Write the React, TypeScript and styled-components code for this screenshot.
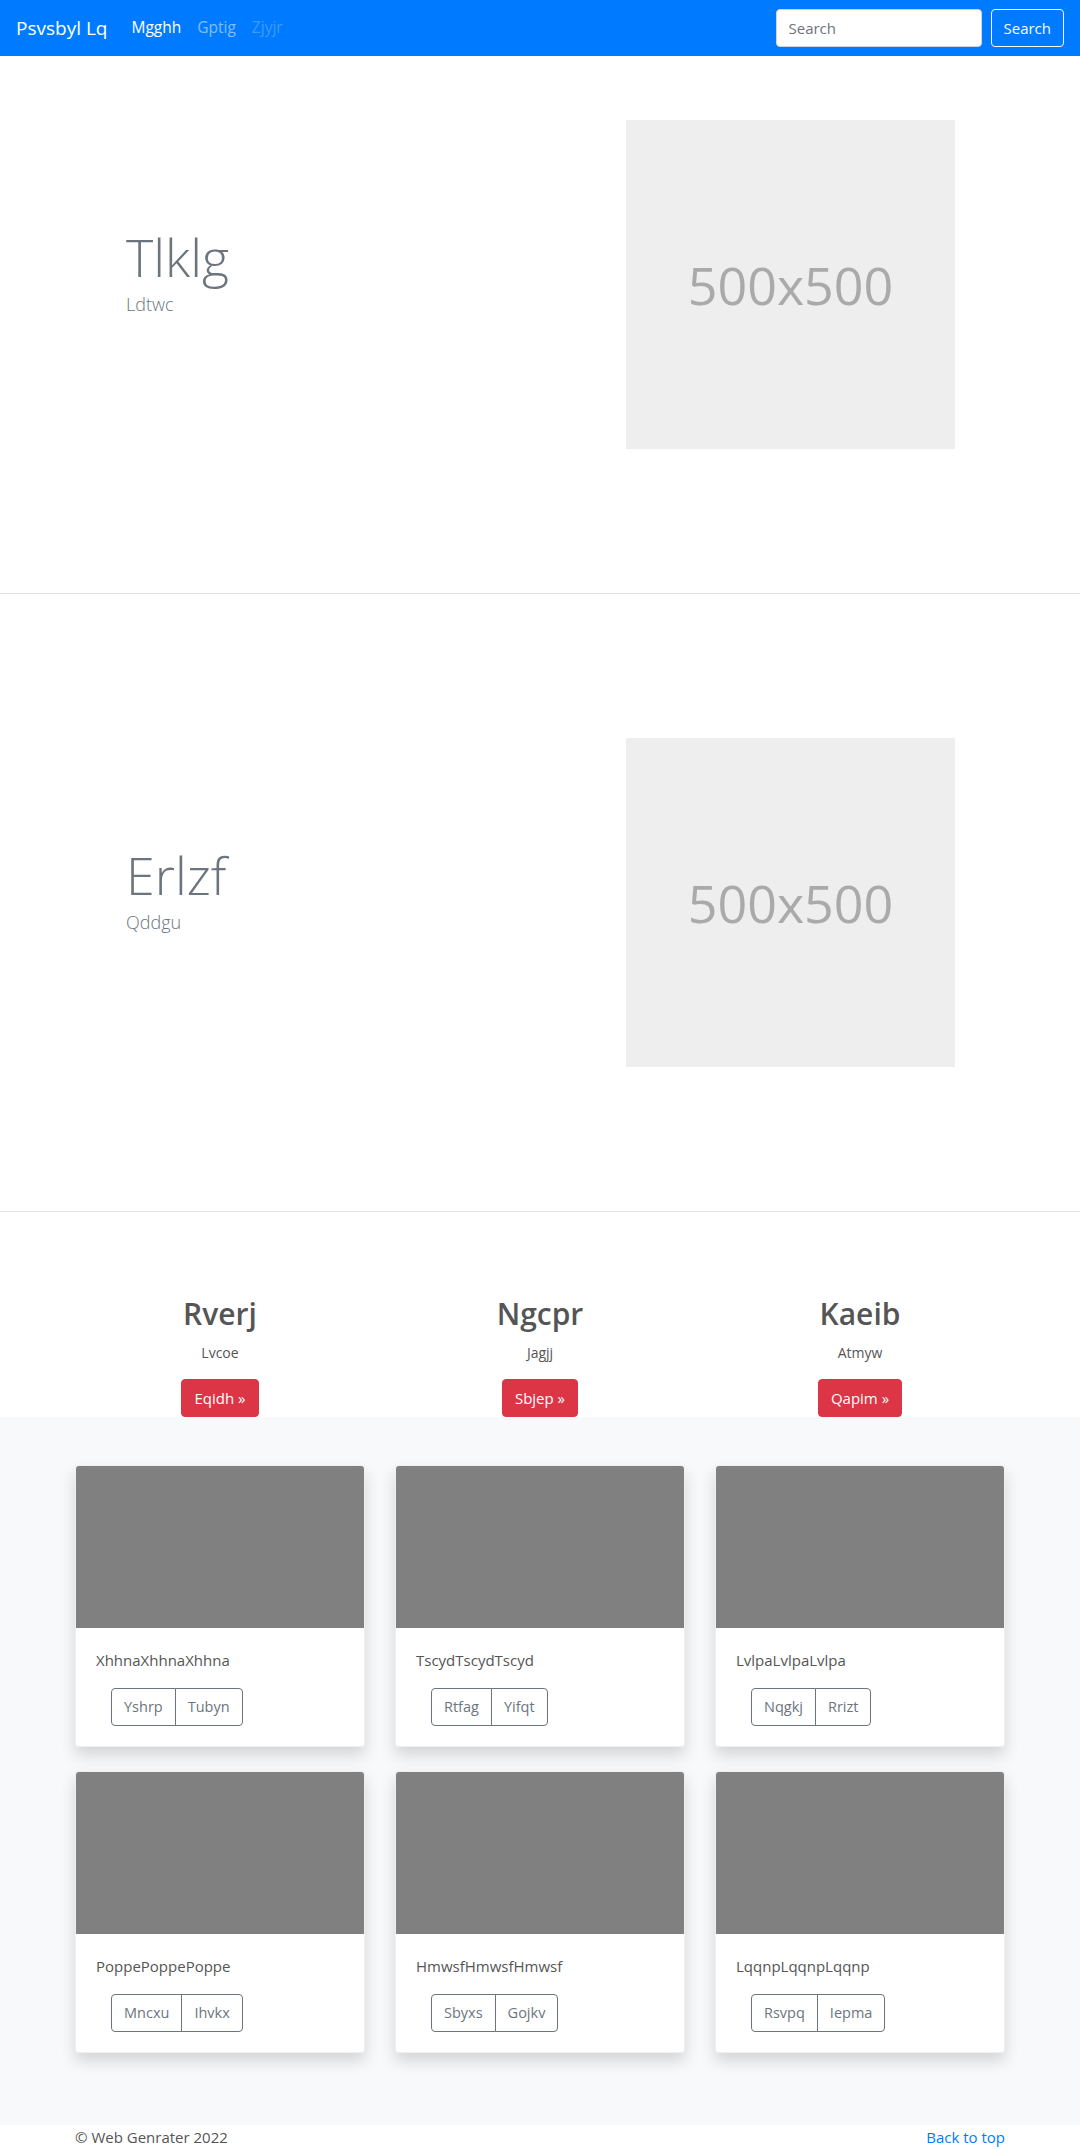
import React from "react";
import styled, { createGlobalStyle } from "styled-components";

const Global = createGlobalStyle`
  * { box-sizing: border-box; }
  body {
    margin: 0;
    font-family: "Open Sans", "Noto Sans", sans-serif;
    font-size: 16px;
    line-height: 1.5;
    color: #212529;
    background: #fff;
  }
`;

const Navbar = styled.nav`
  display: flex;
  align-items: center;
  height: 56px;
  padding: 8px 16px;
  background: #007bff;
`;

const Brand = styled.a`
  font-size: 19px;
  line-height: 30px;
  padding: 5px 0;
  margin-right: 16px;
  color: #fff;
  text-decoration: none;
`;

const NavList = styled.div`
  display: flex;
`;

const NavLink = styled.a<{ $state: "active" | "normal" | "disabled" }>`
  padding: 8px;
  font-size: 15.5px;
  color: ${(p) =>
    p.$state === "active"
      ? "#fff"
      : p.$state === "normal"
      ? "rgba(255,255,255,.5)"
      : "rgba(255,255,255,.25)"};
  text-decoration: none;
`;

const SearchForm = styled.form`
  margin-left: auto;
  display: flex;
  gap: 9px;
`;

const SearchInput = styled.input`
  width: 206px;
  height: 38px;
  padding: 6px 12px;
  font-family: inherit;
  font-size: 15px;
  color: #495057;
  border: 1px solid #ced4da;
  border-radius: 4px;
  background: #fff;
  &::placeholder { color: #6c757d; }
`;

const OutlineLightButton = styled.button`
  height: 38px;
  padding: 6px 12px;
  font-family: inherit;
  font-size: 15px;
  color: #f8f9fa;
  background: transparent;
  border: 1px solid #f8f9fa;
  border-radius: 4px;
`;

const Hero = styled.section<{ $top: number }>`
  padding: ${(p) => p.$top}px 0 144px;
  border-bottom: 1px solid #e2e2e2;
`;

const Container = styled.div`
  width: 960px;
  margin: 0 auto;
  padding: 0 15px;
`;

const HeroRow = styled.div`
  display: flex;
  align-items: center;
`;

const HeroText = styled.div`
  flex: 0 0 50%;
  padding: 0 48px 0 51px;
`;

const Display = styled.h1`
  margin: 0;
  font-size: 52px;
  font-weight: 300;
  line-height: 1.2;
  color: #6c757d;
`;

const Lead = styled.p`
  margin: 3px 0 25px;
  font-size: 18px;
  font-weight: 300;
  color: #6c757d;
`;

const HeroMedia = styled.div`
  flex: 1;
  padding-left: 36px;
  display: flex;
  justify-content: center;
`;

const Placeholder = styled.div`
  width: 329px;
  height: 329px;
  background: #eee;
  color: #aaa;
  font-size: 52px;
  display: flex;
  align-items: center;
  justify-content: center;
`;

const Features = styled.section`
  padding: 84px 0 0;
`;

const FeatureRow = styled.div`
  display: grid;
  grid-template-columns: repeat(3, 1fr);
  margin: 0 -15px;
`;

const Feature = styled.div`
  padding: 0 15px;
  text-align: center;
`;

const FeatureTitle = styled.h2`
  margin: 0 0 10px;
  font-size: 30px;
  font-weight: 600;
  line-height: 1.2;
  color: #555;
`;

const FeatureText = styled.p`
  margin: 0 0 16px;
  font-size: 14px;
  color: #555;
`;

const DangerButton = styled.a`
  display: inline-block;
  height: 38px;
  padding: 6px 12px;
  font-size: 15px;
  line-height: 24px;
  color: #fff;
  background: #dc3545;
  border: 1px solid #dc3545;
  border-radius: 4px;
  text-decoration: none;
  vertical-align: bottom;
`;

const Album = styled.section`
  background: #f8f9fa;
  padding: 48px 0 72px;
`;

const CardGrid = styled.div`
  display: grid;
  grid-template-columns: repeat(3, 1fr);
  column-gap: 30px;
  row-gap: 24px;
`;

const Card = styled.div`
  background: #fff;
  border: 1px solid rgba(0, 0, 0, 0.06);
  border-radius: 4px;
  overflow: hidden;
  box-shadow: 0 8px 16px rgba(0, 0, 0, 0.15);
`;

const CardImage = styled.div`
  height: 162px;
  background: #808080;
`;

const CardBody = styled.div`
  padding: 20px;
`;

const CardText = styled.p`
  margin: 0 0 16px;
  font-size: 15px;
  line-height: 24px;
  color: #555;
`;

const ButtonGroup = styled.div`
  display: inline-flex;
  margin-left: 15px;
`;

const GroupButton = styled.button<{ $first?: boolean }>`
  height: 38px;
  padding: 6px 12px;
  font-family: inherit;
  font-size: 14.5px;
  line-height: 24px;
  color: #6c757d;
  background: transparent;
  border: 1px solid #6c757d;
  border-radius: ${(p) => (p.$first ? "4px 0 0 4px" : "0 4px 4px 0")};
  margin-left: ${(p) => (p.$first ? "0" : "-1px")};
`;

const Footer = styled.footer`
  padding: 0;
`;

const FooterRow = styled.div`
  display: flex;
  justify-content: space-between;
  font-size: 15px;
  line-height: 24px;
`;

const Copy = styled.span`
  color: #555;
`;

const TopLink = styled.a`
  color: #007bff;
  text-decoration: none;
`;

const heroes = [
  { title: "Tlklg", lead: "Ldtwc", top: 64 },
  { title: "Erlzf", lead: "Qddgu", top: 144 },
];

const features = [
  { title: "Rverj", text: "Lvcoe", btn: "Eqidh" },
  { title: "Ngcpr", text: "Jagjj", btn: "Sbjep" },
  { title: "Kaeib", text: "Atmyw", btn: "Qapim" },
];

const cards = [
  { name: "Xhhna", a: "Yshrp", b: "Tubyn" },
  { name: "Tscyd", a: "Rtfag", b: "Yifqt" },
  { name: "Lvlpa", a: "Nqgkj", b: "Rrizt" },
  { name: "Poppe", a: "Mncxu", b: "Ihvkx" },
  { name: "Hmwsf", a: "Sbyxs", b: "Gojkv" },
  { name: "Lqqnp", a: "Rsvpq", b: "Iepma" },
];

export default function App() {
  return (
    <>
      <Global />
      <Navbar>
        <Brand href="#">Psvsbyl Lq</Brand>
        <NavList>
          <NavLink $state="active" href="#">Mgghh</NavLink>
          <NavLink $state="normal" href="#">Gptig</NavLink>
          <NavLink $state="disabled" href="#">Zjyjr</NavLink>
        </NavList>
        <SearchForm onSubmit={(e) => e.preventDefault()}>
          <SearchInput placeholder="Search" />
          <OutlineLightButton type="submit">Search</OutlineLightButton>
        </SearchForm>
      </Navbar>

      {heroes.map((h) => (
        <Hero key={h.title} $top={h.top}>
          <Container>
            <HeroRow>
              <HeroText>
                <Display>{h.title}</Display>
                <Lead>{h.lead}</Lead>
              </HeroText>
              <HeroMedia>
                <Placeholder>500x500</Placeholder>
              </HeroMedia>
            </HeroRow>
          </Container>
        </Hero>
      ))}

      <Features>
        <Container>
          <FeatureRow>
            {features.map((f) => (
              <Feature key={f.title}>
                <FeatureTitle>{f.title}</FeatureTitle>
                <FeatureText>{f.text}</FeatureText>
                <DangerButton href="#">{f.btn} »</DangerButton>
              </Feature>
            ))}
          </FeatureRow>
        </Container>
      </Features>

      <Album>
        <Container>
          <CardGrid>
            {cards.map((c) => (
              <Card key={c.name}>
                <CardImage />
                <CardBody>
                  <CardText>{c.name + c.name + c.name}</CardText>
                  <ButtonGroup>
                    <GroupButton $first type="button">{c.a}</GroupButton>
                    <GroupButton type="button">{c.b}</GroupButton>
                  </ButtonGroup>
                </CardBody>
              </Card>
            ))}
          </CardGrid>
        </Container>
      </Album>

      <Footer>
        <Container>
          <FooterRow>
            <Copy>© Web Genrater 2022</Copy>
            <TopLink href="#">Back to top</TopLink>
          </FooterRow>
        </Container>
      </Footer>
    </>
  );
}
